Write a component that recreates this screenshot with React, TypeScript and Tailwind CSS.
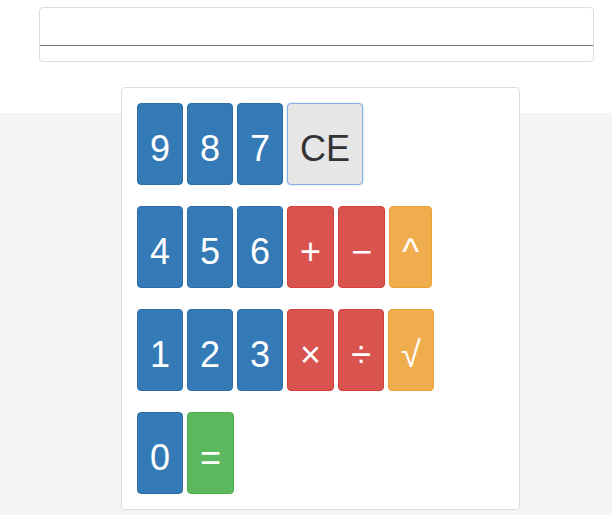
import React from "react";

type Key = {
  label: string;
  kind: "num" | "op" | "pow" | "eq" | "clear";
};

const rows: Key[][] = [
  [
    { label: "9", kind: "num" },
    { label: "8", kind: "num" },
    { label: "7", kind: "num" },
    { label: "CE", kind: "clear" },
  ],
  [
    { label: "4", kind: "num" },
    { label: "5", kind: "num" },
    { label: "6", kind: "num" },
    { label: "+", kind: "op" },
    { label: "\u2212", kind: "op" },
    { label: "^", kind: "pow" },
  ],
  [
    { label: "1", kind: "num" },
    { label: "2", kind: "num" },
    { label: "3", kind: "num" },
    { label: "\u00d7", kind: "op" },
    { label: "\u00f7", kind: "op" },
    { label: "\u221a", kind: "pow" },
  ],
  [
    { label: "0", kind: "num" },
    { label: "=", kind: "eq" },
  ],
];

const kindClass: Record<Key["kind"], string> = {
  num: "bg-[#337ab7] border-[#2e6da4] text-white",
  op: "bg-[#d9534f] border-[#d43f3a] text-white",
  pow: "bg-[#f0ad4e] border-[#eea236] text-white",
  eq: "bg-[#5cb85c] border-[#4cae4c] text-white",
  clear:
    "bg-[#e6e6e6] border-[#86aee0] text-[#333] shadow-[0_0_2px_rgba(102,175,233,0.6)]",
};

export default function App() {
  return (
    <div
      className="min-h-[515px] flex flex-col"
      style={{ fontFamily: '"Liberation Sans", Arial, sans-serif' }}
    >
      <div className="bg-white pt-[7px] h-[113px]">
        <div className="ml-[39px] w-[555px] border border-[#dddddd] rounded-[4px] bg-white">
          <div className="h-[37px]" />
          <div className="h-px bg-[#707070]" />
          <div className="h-[15px]" />
        </div>
      </div>
      <div className="flex-1 bg-[#f4f4f4]">
        <div className="-mt-[26px] ml-[121px] w-[399px] bg-white border border-[#dddddd] rounded-[4px] p-[15px] flex flex-col gap-[21px]">
          {rows.map((row, i) => (
            <div key={i} className="flex gap-1">
              {row.map((k) => (
                <button
                  key={k.label}
                  className={`h-[82px] px-3 pt-[10px] border rounded-[4px] text-[36px] leading-none flex items-center justify-center ${kindClass[k.kind]}`}
                >
                  {k.label}
                </button>
              ))}
            </div>
          ))}
        </div>
      </div>
    </div>
  );
}
